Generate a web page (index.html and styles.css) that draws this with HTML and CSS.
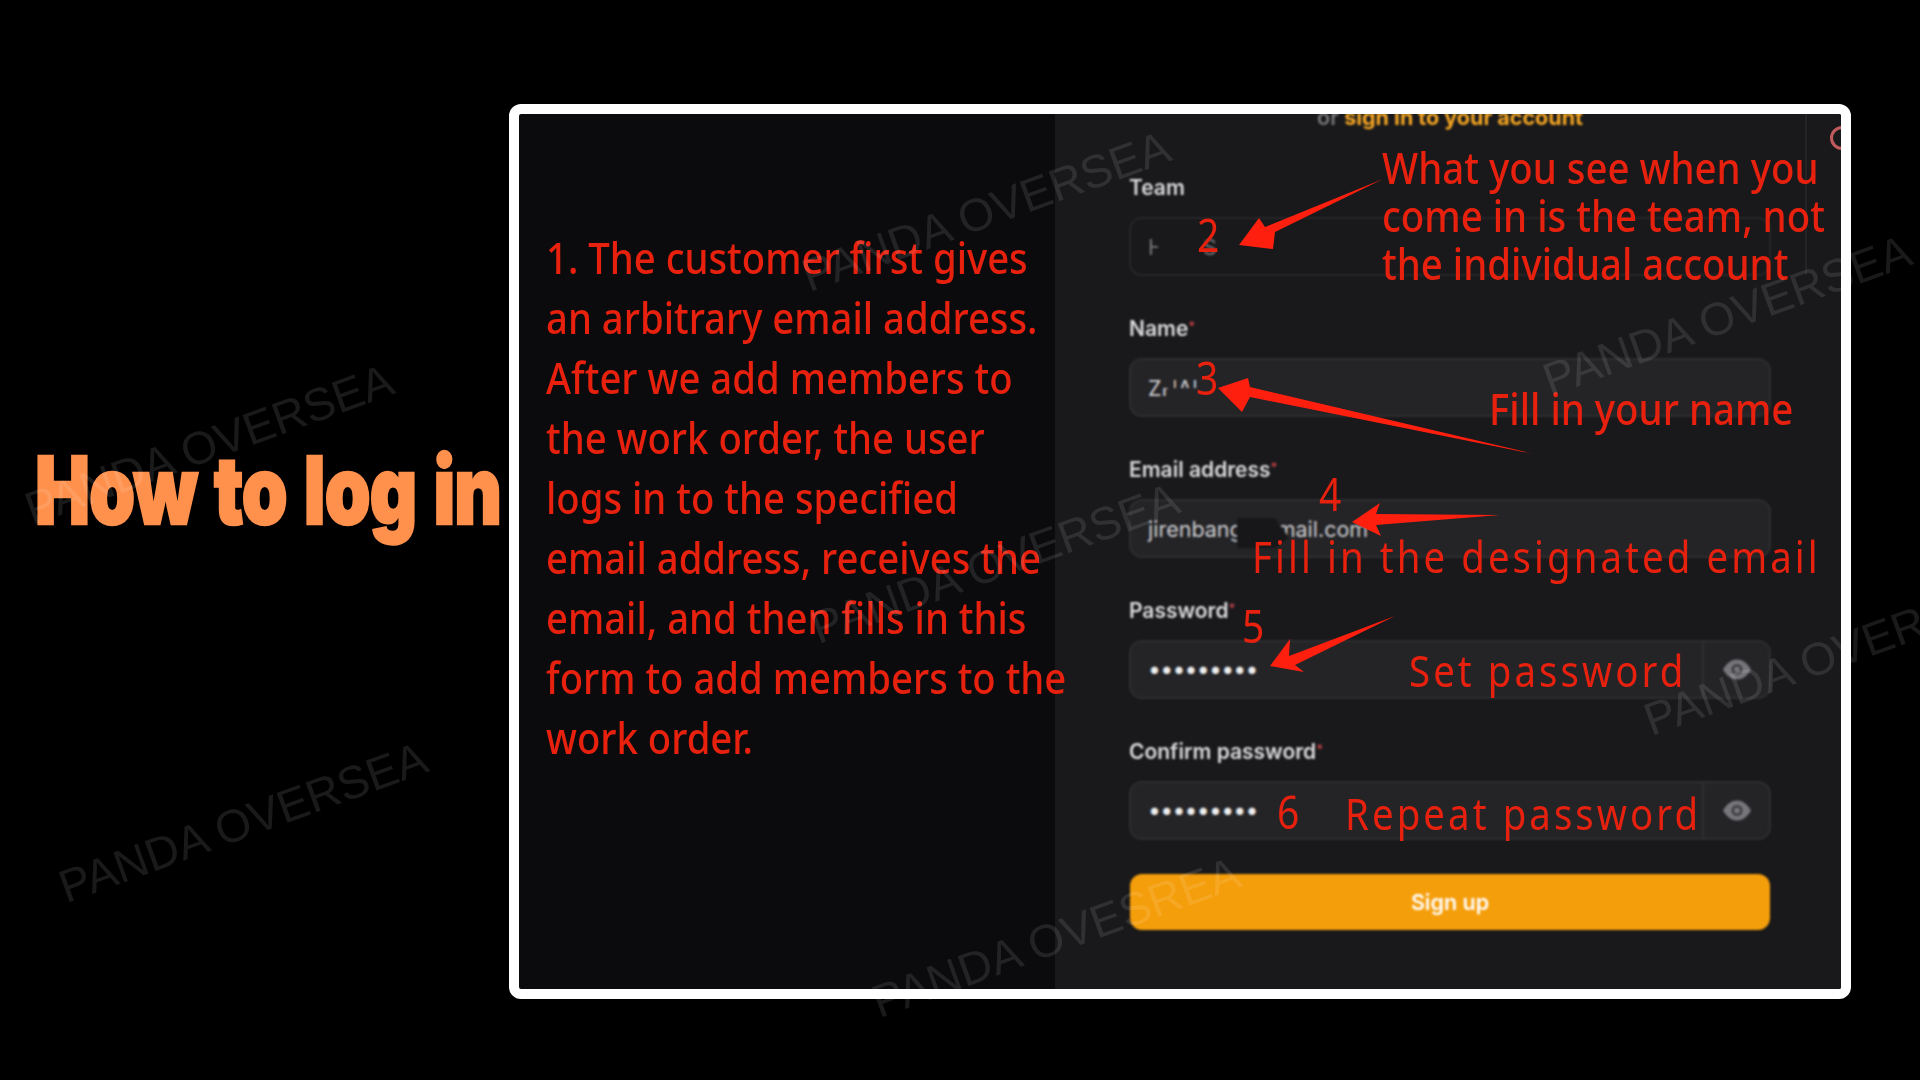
FILE: index.html
```html
<!DOCTYPE html>
<html lang="en">
<head>
<meta charset="utf-8">
<title>How to log in</title>
<link rel="stylesheet" href="styles.css">
</head>
<body>
<div class="stage">
  <h1 class="title"><span class="title-text">How to log in</span></h1>
  <main class="frame">
    <section class="intro">
      <p class="intro-text">1. The customer first gives<br>an arbitrary email address.<br>After we add members to<br>the work order, the user<br>logs in to the specified<br>email address, receives the<br>email, and then fills in this<br>form to add members to the<br>work order.</p>
    </section>
    <section class="panel">
      <div class="topline"></div>
      <div class="close-ring"></div>
      <form class="form">
        <p class="signin">or <b>sign in to your account</b></p>
        <div class="field">
          <div class="label">Team</div>
          <div class="input input-team"><span class="team-a">H</span><span class="team-b">S</span></div>
        </div>
        <div class="field">
          <div class="label">Name<i>*</i></div>
          <div class="input"><span class="val">ZHANG</span><span class="mask mask-name1"></span><span class="mask mask-name2"></span><span class="mask mask-name3"></span></div>
        </div>
        <div class="field">
          <div class="label">Email address<i>*</i></div>
          <div class="input"><span class="val">jirenbang@gmail.com</span><span class="mask mask-email"></span></div>
        </div>
        <div class="field">
          <div class="label">Password<i>*</i></div>
          <div class="input input-pw"><span class="dots">•••••••••</span>
            <span class="eye"><svg width="30" height="23" viewBox="0 0 30 22"><path d="M1 11C5 4 10 1 15 1s10 3 14 10c-4 7-9 10-14 10S5 18 1 11z" fill="#77777b"/><circle cx="15" cy="11" r="5.5" fill="#3c3c40"/><circle cx="15" cy="11" r="3" fill="#77777b"/></svg></span>
          </div>
        </div>
        <div class="field">
          <div class="label">Confirm password<i>*</i></div>
          <div class="input input-pw"><span class="dots">•••••••••</span>
            <span class="eye"><svg width="30" height="23" viewBox="0 0 30 22"><path d="M1 11C5 4 10 1 15 1s10 3 14 10c-4 7-9 10-14 10S5 18 1 11z" fill="#77777b"/><circle cx="15" cy="11" r="5.5" fill="#3c3c40"/><circle cx="15" cy="11" r="3" fill="#77777b"/></svg></span>
          </div>
        </div>
        <div class="submit">Sign up</div>
      </form>
    </section>
  </main>

  <svg class="arrows" width="1920" height="1080" viewBox="0 0 1920 1080">
    <polygon points="1383,179 1275,232 1273,249 1239,245 1259,218 1265,227"/>
    <polygon points="1534,454 1250,397 1242,412 1218,388 1248,378 1250,387"/>
    <polygon points="1500,515 1376,525 1381,536 1352,522 1380,503 1376,514"/>
    <polygon points="1395,616 1295,665 1304,672 1270,666 1290,639 1289,656"/>
  </svg>

  <div class="note n-team">What you see when you<br>come in is the team, not<br>the individual account</div>
  <div class="note n-name">Fill in your name</div>
  <div class="note n-email">Fill in the designated email</div>
  <div class="note n-set">Set password</div>
  <div class="note n-repeat">Repeat password</div>
  <div class="note num n-2">2</div>
  <div class="note num n-3">3</div>
  <div class="note num n-4">4</div>
  <div class="note num n-5">5</div>
  <div class="note num n-6">6</div>

  <div class="wm w1">PANDA OVERSEA</div>
  <div class="wm w2">PANDA OVERSEA</div>
  <div class="wm w3">PANDA OVERSEA</div>
  <div class="wm w4">PANDA OVERSEA</div>
  <div class="wm w5">PANDA OVESREA</div>
  <div class="wm w6">PANDA OVERSEA</div>
  <div class="wm w7">PANDA OVERSEA</div>
</div>
</body>
</html>
```

FILE: styles.css
```css
* { box-sizing: border-box; }
html, body { margin: 0; background: #000; }
.stage {
  position: relative;
  width: 1920px;
  height: 1080px;
  overflow: hidden;
  display: flex;
  align-items: flex-start;
  padding-top: 104px;
  font-family: Inter, "Liberation Sans", sans-serif;
}

/* title */
.title {
  flex: 0 0 509px;
  min-width: 0;
  margin: 336px 0 0;
  padding-left: 35px;
  font-family: Inter, "Liberation Sans", sans-serif;
  font-size: 94px;
  line-height: 100px;
  font-weight: 900;
  color: #ff914d;
  white-space: nowrap;
}
.title-text {
  display: inline-block;
  transform: scaleX(.78);
  transform-origin: left center;
  -webkit-text-stroke: 2.5px #ff914d;
  letter-spacing: -1px;
  word-spacing: 4px;
}

/* frame */
.frame {
  flex: 0 0 1342px;
  height: 895px;
  border: 10px solid #fff;
  border-radius: 12px;
  display: grid;
  grid-template-columns: 536px 806px;
  overflow: hidden;
  background: #0b0b0d;
}
.intro { padding: 113px 0 0 27px; position: relative; z-index: 2; min-width: 0; }
.intro-text {
  margin: 0;
  width: 700px;
  font-family: "Noto Sans", sans-serif;
  font-size: 44px;
  font-weight: 500;
  line-height: 60px;
  color: #e8210f;
  white-space: nowrap;
  transform: scaleX(.87);
  transform-origin: left top;
}

.panel {
  position: relative;
  background: #19191b;
  padding-left: 74px;
  width: 787px;
}
.topline {
  position: absolute;
  left: 750px;
  top: 0;
  width: 2px;
  height: 161px;
  background: #242427;
}
.close-ring {
  position: absolute;
  left: 775px;
  top: 12px;
  width: 24px;
  height: 24px;
  border: 3px solid #c05a5c;
  border-radius: 50%;
  filter: blur(.6px);
}

/* form */
.form { width: 642px; filter: blur(.8px); margin-top: -11px; }
.signin {
  margin: 0 0 40px;
  text-align: center;
  font-size: 21.5px;
  line-height: 28px;
  font-weight: 600;
  color: #77777b;
}
.signin b { color: #f5a623; font-weight: 700; }
.field { margin-bottom: 36px; }
.label {
  height: 30px;
  margin-bottom: 16px;
  padding-top: 1.5px;
  font-size: 21px;
  line-height: 30px;
  font-weight: 600;
  color: #dcdcde;
}
.label i {
  position: relative;
  top: -5px;
  font-style: normal;
  font-size: 13px;
  color: #c8444a;
}
.input {
  position: relative;
  height: 59px;
  padding: 0 17px;
  display: flex;
  align-items: center;
  background: #242427;
  border: 2px solid #2e2e31;
  border-radius: 13px;
  font-size: 21.5px;
  color: #cfcfd2;
}
.input-team { background: transparent; border-color: #27272a; color: #77787c; }
.team-a { width: 10px; overflow: hidden; }
.team-b { margin-left: 45px; }
.mask { position: absolute; background: #242427; }
.mask-name1 { left: 31px; top: 15px; width: 12px; height: 13px; }
.mask-name2 { left: 37px; top: 28px; width: 40px; height: 14px; }
.mask-name3 { left: 65px; top: 10px; width: 30px; height: 40px; }
.mask-email {
  left: 106px;
  top: 17px;
  width: 52px;
  height: 30px;
  background: #17171a;
  clip-path: polygon(0 0, 73% 0, 100% 65%, 75% 100%, 0 100%);
}
.input-pw { padding-right: 0; justify-content: space-between; }
.dots { font-size: 23px; letter-spacing: -.75px; color: #eee; line-height: 1; }
.eye {
  flex: 0 0 67px;
  height: 100%;
  border-left: 2px solid #2e2e31;
  display: flex;
  align-items: center;
  justify-content: center;
}
.submit {
  margin: -2px 1px 0;
  height: 56px;
  background: #f59e0b;
  border-radius: 12px;
  color: #fff;
  font-size: 21.5px;
  font-weight: 600;
  display: flex;
  align-items: center;
  justify-content: center;
}

/* annotations laid over the form */
.arrows { position: absolute; left: 0; top: 0; z-index: 3; }
.arrows polygon { fill: #ff1f0f; }
.note {
  position: absolute;
  z-index: 4;
  font-family: "Noto Sans", sans-serif;
  font-size: 44px;
  font-weight: 500;
  line-height: 48px;
  color: #e8210f;
  white-space: nowrap;
  transform: scaleX(.873);
  transform-origin: left top;
}
.note.num { font-size: 46px; font-weight: 400; transform: scaleX(.85); }
.n-team { left: 1382px; top: 143px; }
.n-name { left: 1489px; top: 384px; }
.n-email { left: 1252px; top: 532px; letter-spacing: 3.5px; font-weight: 400; }
.n-set { left: 1409px; top: 646px; letter-spacing: 3.5px; font-weight: 400; }
.n-repeat { left: 1345px; top: 789px; letter-spacing: 3.5px; font-weight: 400; }
.n-2 { left: 1197px; top: 210px; }
.n-3 { left: 1196px; top: 353px; }
.n-4 { left: 1319px; top: 469px; }
.n-5 { left: 1242px; top: 601px; }
.n-6 { left: 1277px; top: 787px; }

/* watermarks */
.wm {
  position: absolute;
  z-index: 5;
  font-family: "Liberation Sans", sans-serif;
  font-size: 46px;
  line-height: 1;
  color: rgba(255, 255, 255, .1);
  white-space: nowrap;
  transform: translate(-50%, -50%) rotate(-20deg);
}
.w1 { left: 209px; top: 444px; }
.w2 { left: 243px; top: 822px; }
.w3 { left: 986px; top: 211px; }
.w4 { left: 995px; top: 563px; }
.w5 { left: 1056px; top: 937px; }
.w6 { left: 1727px; top: 315px; }
.w7 { left: 1828px; top: 655px; }
```
